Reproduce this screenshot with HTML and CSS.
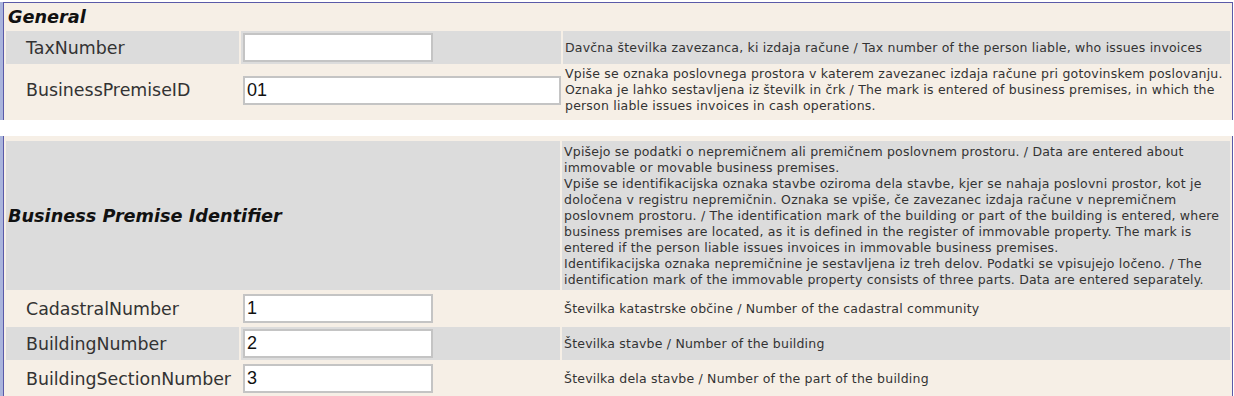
FILE: index.html
```html
<!DOCTYPE html>
<html lang="en">
<head>
  <meta charset="UTF-8" />
  <title>Business Premise</title>
  <link rel="stylesheet" href="styles.css">
</head>
<body>
  <div class="panel first">
    <table class="form">
      <tr>
        <td class="group" colspan="3">General</td>
      </tr>
      <tr class="alt">
        <td class="label">TaxNumber</td>
        <td class="field"><input type="text" class="small" value=""></td>
        <td class="desc">Davčna številka zavezanca, ki izdaja račune / Tax number of the person liable, who issues invoices</td>
      </tr>
      <tr>
        <td class="label">BusinessPremiseID</td>
        <td class="field"><input type="text" class="wide" value="01"></td>
        <td class="desc">Vpiše se oznaka poslovnega prostora v katerem zavezanec izdaja račune pri gotovinskem poslovanju. Oznaka je lahko sestavljena iz številk in črk / The mark is entered of business premises, in which the person liable issues invoices in cash operations.</td>
      </tr>
    </table>
  </div>

  <div class="panel second">
    <table class="form">
      <tr class="alt">
        <td class="group tall" colspan="2">Business Premise Identifier</td>
        <td class="desc">Vpišejo se podatki o nepremičnem ali premičnem poslovnem prostoru. / Data are entered about immovable or movable business premises.<br>Vpiše se identifikacijska oznaka stavbe oziroma dela stavbe, kjer se nahaja poslovni prostor, kot je določena v registru nepremičnin. Oznaka se vpiše, če zavezanec izdaja račune v nepremičnem poslovnem prostoru. / The identification mark of the building or part of the building is entered, where business premises are located, as it is defined in the register of immovable property. The mark is entered if the person liable issues invoices in immovable business premises.<br>Identifikacijska oznaka nepremičnine je sestavljena iz treh delov. Podatki se vpisujejo ločeno. / The identification mark of the immovable property consists of three parts. Data are entered separately.</td>
      </tr>
      <tr>
        <td class="label">CadastralNumber</td>
        <td class="field"><input type="text" class="small" value="1"></td>
        <td class="desc">Številka katastrske občine / Number of the cadastral community</td>
      </tr>
      <tr class="alt">
        <td class="label">BuildingNumber</td>
        <td class="field"><input type="text" class="small" value="2"></td>
        <td class="desc">Številka stavbe / Number of the building</td>
      </tr>
      <tr>
        <td class="label">BuildingSectionNumber</td>
        <td class="field"><input type="text" class="small" value="3"></td>
        <td class="desc">Številka dela stavbe / Number of the part of the building</td>
      </tr>
    </table>
  </div>
</body>
</html>
```

FILE: styles.css
```css
body {
  margin: 0;
  background: #fff;
  font-family: "DejaVu Sans", Verdana, sans-serif;
  color: #222;
}
.panel {
  background: #f6efe6;
  margin-left: 3px;
  margin-right: 1px;
  border-left: 1px solid #5a5aa8;
  border-right: 1px solid #5a5aa8;
  box-shadow: -3px 0 0 #aab4dc;
}
.panel.first {
  border-top: 1px solid #5a5aa8;
  margin-top: 2px;
  height: 117px;
}
.panel.second {
  margin-top: 16px;
  padding-top: 3px;
}
.form {
  width: 100%;
  border-spacing: 2px;
}
.form td {
  padding: 0;
  vertical-align: middle;
}
.alt td {
  background: #dcdcdc;
}
.group {
  font-weight: bold;
  font-style: italic;
  font-size: 17.7px;
  color: #111;
  height: 24px;
  padding-left: 2px !important;
}
.group.tall {
  height: 149px;
}
.label {
  width: 213px;
  padding-left: 20px !important;
  font-size: 17.4px;
  color: #333;
  height: 33px;
}
.field {
  width: 319px;
}
.desc {
  font-size: 12.5px;
  letter-spacing: 0.2px;
  line-height: 16px;
  color: #333;
  padding-left: 2px !important;
  padding-right: 0 !important;
}
input {
  font-family: "Liberation Sans", Arial, sans-serif;
  font-size: 18px;
  color: #111;
  height: 29px;
  box-sizing: border-box;
  border: 2px solid #c4c4c4;
  padding: 0 2px;
  background: #fff;
  margin: 0 0 0 2px;
}
input.small {
  width: 190px;
}
input.wide {
  width: 318px;
}
```
